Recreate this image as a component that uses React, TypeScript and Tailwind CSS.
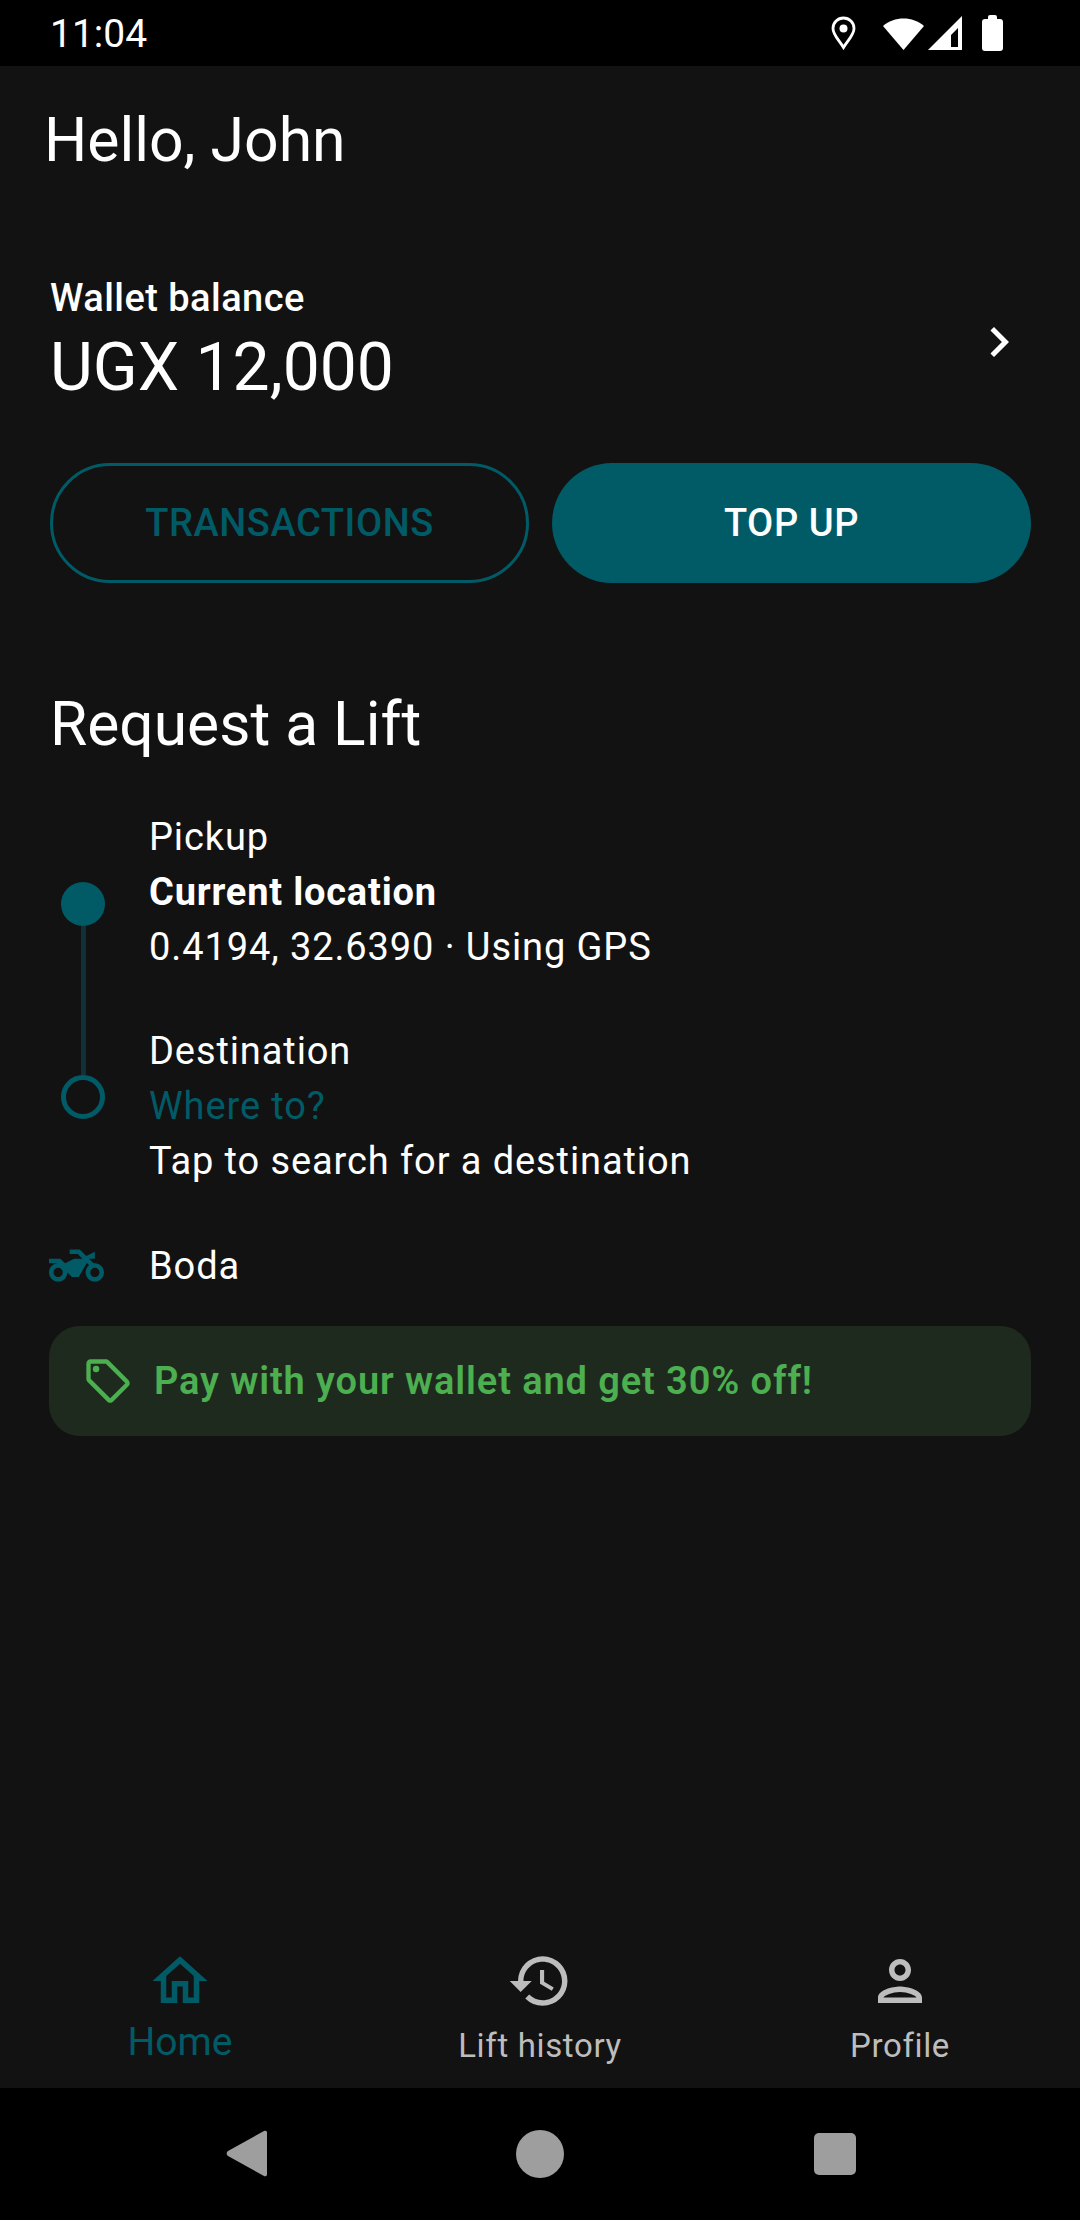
import React from 'react';
import { MdChevronRight, MdHistory, MdOutlineHome, MdOutlineLocalOffer, MdOutlinePerson, MdTwoWheeler } from 'react-icons/md';

function StatusBar() {
  return (
    <div className="h-[66px] shrink-0 bg-black flex items-center justify-between pl-[50px] pr-[77px] text-white">
      <span className="text-[39px] leading-none mt-[2px]">11:04</span>
      <div className="flex items-center">
        <svg width="25" height="34" viewBox="0 0 25 34" fill="none">
          <path d="M12.500 31.500C8 24 2 19 2 12.500a10.500 10.500 0 0 1 21 0C23 19 17 24 12.500 31.500z" stroke="white" strokeWidth="2.800" />
          <circle cx="12.500" cy="12.500" r="4" fill="white" />
        </svg>
        <svg width="41" height="34" viewBox="0 0 41 34" className="ml-[27px]">
          <path d="M0 10C11 0 30 0 41 10L20.500 34z" fill="white" />
        </svg>
        <svg width="34" height="34" viewBox="0 0 34 34" className="ml-[4px]">
          <path fillRule="evenodd" d="M0 34L34 0v34zM30 12L23 19v12h7z" fill="white" />
        </svg>
        <svg width="21" height="36" viewBox="0 0 21 36" className="ml-[20px]">
          <path d="M6 2a2 2 0 0 1 2-2h5a2 2 0 0 1 2 2v2h3a3 3 0 0 1 3 3v26a3 3 0 0 1-3 3H3a3 3 0 0 1-3-3V7a3 3 0 0 1 3-3h3z" fill="white" />
        </svg>
      </div>
    </div>
  );
}

function Wallet() {
  return (
    <section>
      <div className="flex items-center justify-between pl-[50px] pr-[51px]">
        <div>
          <div className="text-[38px] leading-[50px] font-medium tracking-[0.45px] text-white">Wallet balance</div>
          <div className="text-[66px] leading-[90px] text-white">UGX 12,000</div>
        </div>
        <MdChevronRight className="text-white -mt-[2px]" size={60} />
      </div>
      <div className="mt-[50px] pl-[50px] pr-[49px] grid grid-cols-2 gap-[23px]">
        <button className="h-[120px] rounded-full border-[3px] border-[#005b66] text-[#005b66] text-[38px] font-medium tracking-[0.6px]">TRANSACTIONS</button>
        <button className="h-[120px] rounded-full bg-[#005b66] text-white text-[38px] font-medium tracking-[0.6px]">TOP UP</button>
      </div>
    </section>
  );
}

function RequestLift() {
  return (
    <section className="mt-[102px] pl-[50px] pr-[49px]">
      <h2 className="text-[60.500px] leading-[80px] text-white">Request a Lift</h2>
      <div className="mt-[45px] flex">
        <div className="w-[99px] shrink-0 flex flex-col pl-[11px] pt-[72px]">
          <div className="w-[44px] h-[44px] rounded-full bg-[#005b66]" />
          <div className="w-[5px] h-[149px] ml-[19.500px] bg-[#0f3238]" />
          <div className="w-[44px] h-[44px] rounded-full border-[5px] border-[#005b66]" />
        </div>
        <div className="text-[38px] leading-[55px] tracking-[0.9px] text-white">
          <div>Pickup</div>
          <div className="font-bold tracking-[0.8px]">Current location</div>
          <div>0.4194, 32.6390 · Using GPS</div>
          <div className="mt-[49px]">Destination</div>
          <div className="text-[#005b66]">Where to?</div>
          <div>Tap to search for a destination</div>
        </div>
      </div>
      <div className="mt-[48px] h-[59px] flex items-center">
        <div className="w-[99px] shrink-0">
          <MdTwoWheeler className="text-[#005b66] -ml-[1px] -mt-[3px]" size={55} />
        </div>
        <span className="text-[38px] tracking-[0.9px] text-white">Boda</span>
      </div>
      <div className="mt-[30px] -ml-[1px] h-[110px] rounded-[31px] bg-[#1f2a1f] flex items-center pl-[33px]">
        <MdOutlineLocalOffer className="text-[#4caf50]" size={52} />
        <span className="ml-[20px] text-[38px] font-semibold tracking-[0.9px] text-[#4caf50]">Pay with your wallet and get 30% off!</span>
      </div>
    </section>
  );
}

function BottomNav() {
  return (
    <nav className="h-[148px] shrink-0 grid grid-cols-3">
      <div className="flex flex-col items-center pt-[8px] text-[#005b66]">
        <MdOutlineHome size={66} />
        <span className="text-[39px] leading-[48px] mt-[4px]">Home</span>
      </div>
      <div className="flex flex-col items-center pt-[8px] text-[#bdbdbd]">
        <MdHistory size={66} />
        <span className="text-[33px] leading-[44px] mt-[10px] tracking-[0.65px]">Lift history</span>
      </div>
      <div className="flex flex-col items-center pt-[8px] text-[#bdbdbd]">
        <MdOutlinePerson size={66} />
        <span className="text-[33px] leading-[44px] mt-[10px] tracking-[0.65px]">Profile</span>
      </div>
    </nav>
  );
}

function SystemNav() {
  return (
    <div className="h-[132px] shrink-0 bg-black flex items-center justify-center pl-[2px] pb-[1px]">
      <svg width="41" height="47" viewBox="0 0 41 47">
        <path d="M38 1a2 2 0 0 1 3 2v41a2 2 0 0 1-3 2L2 26a3 3 0 0 1 0-5z" fill="#9e9e9e" />
      </svg>
      <div className="ml-[249px] w-[48px] h-[48px] rounded-full bg-[#9e9e9e]" />
      <div className="ml-[250px] w-[42px] h-[42px] rounded-[5px] bg-[#9e9e9e]" />
    </div>
  );
}

export default function App() {
  return (
    <div className="w-[1080px] h-[2220px] flex flex-col bg-[#121212] font-['Roboto',sans-serif]">
      <StatusBar />
      <main className="flex-1">
        <h1 className="pl-[44px] pt-[40px] text-[60.700px] leading-[70px] text-white">Hello, John</h1>
        <div className="mt-[97px]">
          <Wallet />
          <RequestLift />
        </div>
      </main>
      <BottomNav />
      <SystemNav />
    </div>
  );
}
